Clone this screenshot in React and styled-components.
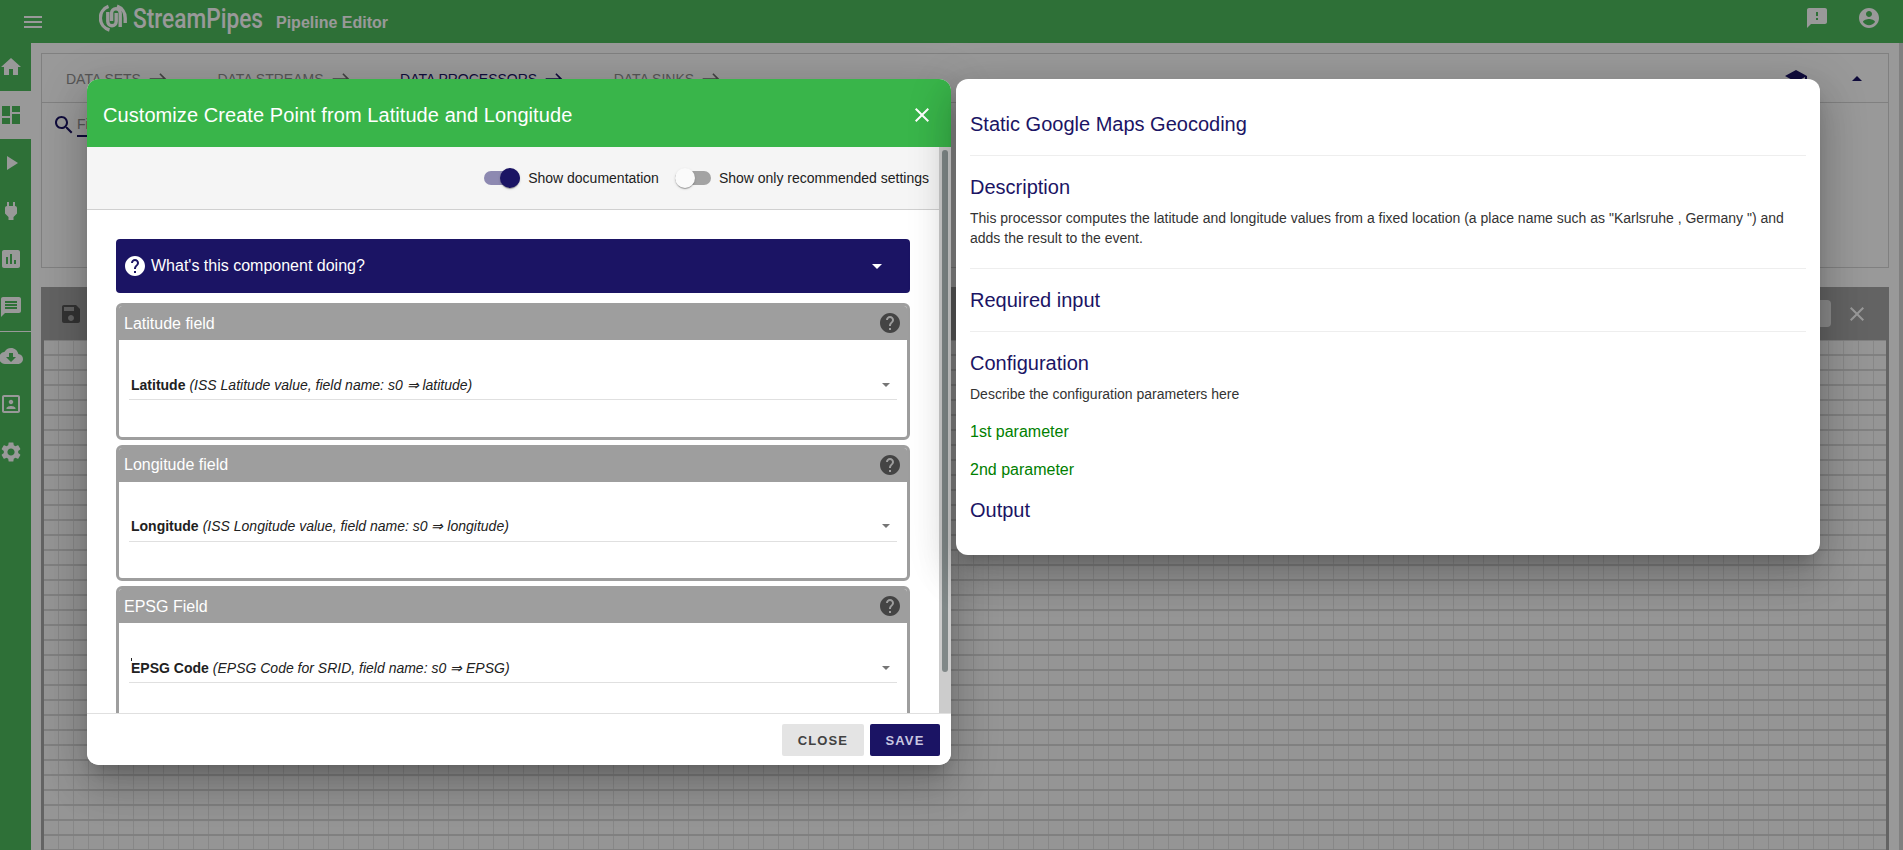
import React from 'react';
import styled, { createGlobalStyle } from 'styled-components';

const icons = {
  menu: 'M3 18h18v-2H3v2zm0-5h18v-2H3v2zm0-7v2h18V6H3z',
  home: 'M10 20v-6h4v6h5v-8h3L12 3 2 12h3v8z',
  dashboard: 'M3 13h8V3H3v10zm0 8h8v-6H3v6zm10 0h8V11h-8v10zm0-18v6h8V3h-8z',
  play: 'M8 5v14l11-7z',
  plug: 'M16.01 7L16 3h-2v4h-4V3H8v4h-.01C7 6.99 6 7.99 6 8.99v5.49L9.5 18v3h5v-3l3.5-3.51v-5.5c0-1-1-2-1.99-1.99z',
  chart: 'M19 3H5c-1.1 0-2 .9-2 2v14c0 1.1.9 2 2 2h14c1.1 0 2-.9 2-2V5c0-1.1-.9-2-2-2zM9 17H7v-7h2v7zm4 0h-2V7h2v10zm4 0h-2v-4h2v4z',
  message: 'M20 2H4c-1.1 0-1.99.9-1.99 2L2 22l4-4h14c1.1 0 2-.9 2-2V4c0-1.1-.9-2-2-2zm-2 12H6v-2h12v2zm0-3H6V9h12v2zm0-3H6V6h12v2z',
  cloud: 'M19.35 10.04C18.67 6.59 15.64 4 12 4 9.11 4 6.6 5.64 5.35 8.04 2.34 8.36 0 10.91 0 14c0 3.31 2.69 6 6 6h13c2.76 0 5-2.24 5-5 0-2.64-2.05-4.78-4.65-4.96zM17 13l-5 5-5-5h3V9h4v4h3z',
  portrait: 'M12 12.25c1.24 0 2.25-1.01 2.25-2.25S13.24 7.75 12 7.75 9.75 8.76 9.75 10s1.01 2.25 2.25 2.25zm4.5 4c0-1.5-3-2.25-4.5-2.25s-4.5.75-4.5 2.25V17h9v-.75zM19 3H5c-1.1 0-2 .9-2 2v14c0 1.1.9 2 2 2h14c1.1 0 2-.9 2-2V5c0-1.1-.9-2-2-2zm0 16H5V5h14v14z',
  settings: 'M19.14 12.94c.04-.3.06-.61.06-.94 0-.32-.02-.64-.07-.94l2.03-1.58c.18-.14.23-.41.12-.61l-1.92-3.32c-.12-.22-.37-.29-.59-.22l-2.39.96c-.5-.38-1.03-.7-1.62-.94l-.36-2.54c-.04-.24-.24-.41-.48-.41h-3.84c-.24 0-.43.17-.47.41l-.36 2.54c-.59.24-1.13.57-1.62.94l-2.39-.96c-.22-.08-.47 0-.59.22L2.74 8.87c-.12.21-.08.47.12.61l2.03 1.58c-.05.3-.09.63-.09.94s.02.64.07.94l-2.03 1.58c-.18.14-.23.41-.12.61l1.92 3.32c.12.22.37.29.59.22l2.39-.96c.5.38 1.03.7 1.62.94l.36 2.54c.05.24.24.41.48.41h3.84c.24 0 .44-.17.47-.41l.36-2.54c.59-.24 1.13-.56 1.62-.94l2.39.96c.22.08.47 0 .59-.22l1.92-3.32c.12-.22.07-.47-.12-.61l-2.01-1.58zM12 15.6c-1.98 0-3.6-1.62-3.6-3.6s1.62-3.6 3.6-3.6 3.6 1.62 3.6 3.6-1.62 3.6-3.6 3.6z',
  feedback: 'M20 2H4c-1.1 0-1.99.9-1.99 2L2 22l4-4h14c1.1 0 2-.9 2-2V4c0-1.1-.9-2-2-2zm-7 12h-2v-2h2v2zm0-4h-2V6h2v4z',
  account: 'M12 2C6.48 2 2 6.48 2 12s4.48 10 10 10 10-4.48 10-10S17.52 2 12 2zm0 3c1.66 0 3 1.34 3 3s-1.34 3-3 3-3-1.34-3-3 1.34-3 3-3zm0 14.2c-2.5 0-4.71-1.28-6-3.22.03-1.99 4-3.08 6-3.08 1.99 0 5.97 1.09 6 3.08-1.29 1.94-3.5 3.22-6 3.22z',
  help: 'M12 2C6.48 2 2 6.48 2 12s4.48 10 10 10 10-4.48 10-10S17.52 2 12 2zm1 17h-2v-2h2v2zm2.07-7.75l-.9.92C13.45 12.9 13 13.5 13 15h-2v-.5c0-1.1.45-2.1 1.17-2.83l1.24-1.26c.37-.36.59-.86.59-1.41 0-1.1-.9-2-2-2s-2 .9-2 2H8c0-2.21 1.79-4 4-4s4 1.79 4 4c0 .88-.36 1.68-.93 2.25z',
  save: 'M17 3H5c-1.11 0-2 .9-2 2v14c0 1.1.89 2 2 2h14c1.1 0 2-.9 2-2V7l-4-4zm-5 16c-1.66 0-3-1.34-3-3s1.34-3 3-3 3 1.34 3 3-1.34 3-3 3zm3-10H5V5h10v4z',
  close: 'M19 6.41L17.59 5 12 10.59 6.41 5 5 6.41 10.59 12 5 17.59 6.41 19 12 13.41 17.59 19 19 17.59 13.41 12z',
  arrow: 'M15 5l-1.41 1.41L18.17 11H2v2h16.17l-4.58 4.59L15 19l7-7z',
  search: 'M15.5 14h-.79l-.28-.27C15.41 12.59 16 11.11 16 9.5 16 5.91 13.09 3 9.5 3S3 5.91 3 9.5 5.91 16 9.5 16c1.61 0 3.09-.59 4.23-1.57l.27.28v.79l5 4.99L20.49 19l-4.99-5zm-6 0C7.01 14 5 11.99 5 9.5S7.01 5 9.5 5 14 7.01 14 9.5 11.99 14 9.5 14z',
  school: 'M5 13.18v4L12 21l7-3.82v-4L12 17l-7-3.82zM12 3L1 9l11 6 9-4.91V17h2V9L12 3z',
};

const GlobalStyle = createGlobalStyle`
  html, body {
    margin: 0;
    padding: 0;
    overflow: hidden;
    background: #fff;
  }
  * {
    box-sizing: border-box;
  }
`;

const Svg = styled.svg`
  display: block;
  flex: none;
  fill: currentColor;
`;

function Icon({ name, size = 24, ...rest }) {
  return (
    <Svg viewBox="0 0 24 24" width={size} height={size} {...rest}>
      <path d={icons[name]} />
    </Svg>
  );
}

const Page = styled.div`
  position: relative;
  width: 1903px;
  height: 850px;
  overflow: hidden;
  font-family: 'Liberation Sans', Arial, sans-serif;
`;

/* ---- page behind the dialogs ---- */

const Toolbar = styled.header`
  height: 43px;
  background: #4dbb5d;
  color: #fff;
  display: flex;
  align-items: center;
  padding-left: 21px;
  padding-right: 22px;
`;

const Logo = styled.div`
  display: flex;
  align-items: center;
  margin-left: 54px;
  gap: 6px;
  margin-top: -7px;
`;

const LogoText = styled.span`
  font-family: Roboto, sans-serif;
  font-size: 27px;
  font-weight: 500;
  line-height: 36px;
  width: 128px;
  white-space: nowrap;
  transform: scaleX(0.84);
  transform-origin: left center;
  margin-top: 1px;
`;

const PageTitle = styled.span`
  font-size: 16px;
  font-weight: 700;
  margin-left: 9px;
  margin-top: 10px;
`;

const ToolbarRight = styled.div`
  margin-left: auto;
  display: flex;
  gap: 28px;
  margin-top: -7px;
`;

const Main = styled.div`
  display: flex;
  height: 807px;
`;

const Sidebar = styled.nav`
  width: 31px;
  flex: none;
  background: #4dbb5d;
`;

const NavItem = styled.div`
  height: 48px;
  display: flex;
  align-items: center;
  overflow: hidden;
  background: ${p => (p.$active ? '#fff' : 'transparent')};
  color: ${p => (p.$active ? '#4dbb5d' : '#fff')};
  svg {
    margin-left: -1px;
  }
`;

const NavDivider = styled.div`
  height: 1px;
  background: #fff;
`;

const Content = styled.main`
  flex: 1;
  min-width: 0;
  padding: 10px 10px 0;
  display: flex;
  flex-direction: column;
`;

const Tools = styled.section`
  height: 215px;
  border: 1px solid #d5d5d5;
`;

const TabRow = styled.div`
  height: 49px;
  border-bottom: 1px solid #d5d5d5;
  display: flex;
  align-items: center;
  padding: 1px 24px 0;
  color: #1b1464;
`;

const Tab = styled.div`
  display: flex;
  align-items: center;
  gap: 7px;
  margin-right: ${p => p.$gap}px;
  font-size: 14px;
  color: ${p => (p.$selected ? '#1b1464' : '#909090')};
  white-space: nowrap;
  svg {
    color: ${p => (p.$selected ? '#1b1464' : '#707070')};
  }
`;

const TabTools = styled.div`
  margin-left: auto;
  display: flex;
  align-items: center;
  gap: 44px;
`;

const CaretUp = styled.div`
  width: 0;
  height: 0;
  border-left: 5px solid transparent;
  border-right: 5px solid transparent;
  border-bottom: 5px solid #1b1464;
  margin-right: 2px;
`;

const SearchRow = styled.div`
  display: flex;
  align-items: center;
  padding: 10px 0 0 10px;
  color: #1b1464;
  gap: 1px;
`;

const SearchField = styled.div`
  width: 200px;
  font-size: 14px;
  line-height: 20px;
  color: #909090;
  border-bottom: 2px solid #1b1464;
  padding-bottom: 1px;
`;

const Editor = styled.section`
  flex: 1;
  margin-top: 19px;
  border: solid #a5a5a5;
  border-width: 0 3px;
  display: flex;
  flex-direction: column;
`;

const EditorBar = styled.div`
  height: 53px;
  background: #a5a5a5;
  display: flex;
  align-items: center;
  padding-left: 15px;
  padding-right: 17px;
  color: #555;
`;

const EditorInput = styled.div`
  margin-left: auto;
  width: 31px;
  height: 27px;
  border-radius: 4px;
  background: #e6e6e6;
  margin-right: 14px;
`;

const EditorClose = styled.div`
  color: #fff;
`;

const Canvas = styled.div`
  flex: 1;
  background-color: #f8f8f8;
  background-image:
    linear-gradient(to bottom, #d6d6d6 2px, transparent 2px),
    linear-gradient(to right, #e2e2e2 1px, transparent 1px);
  background-size: 15px 15px;
  background-position: 0 -1px, -1px 0;
`;

const PageScroll = styled.div`
  width: 4px;
  flex: none;
  margin-left: auto;
  background: #d5d5d5;
`;

/* ---- overlay and dialogs ---- */

const Backdrop = styled.div`
  position: absolute;
  inset: 0;
  background: rgba(0, 0, 0, 0.4);
  display: flex;
  align-items: flex-start;
  gap: 5px;
  padding: 79px 0 0 87px;
`;

const panelShadow = `
  box-shadow: 0 11px 15px -7px rgba(0, 0, 0, 0.2),
    0 24px 38px 3px rgba(0, 0, 0, 0.14),
    0 9px 46px 8px rgba(0, 0, 0, 0.12);
`;

const Dialog = styled.div`
  width: 864px;
  height: 686px;
  background: #fff;
  border-radius: 12px;
  overflow: hidden;
  display: flex;
  flex-direction: column;
  ${panelShadow}
`;

const DialogHeader = styled.div`
  height: 68px;
  flex: none;
  background: #39b54a;
  color: #fff;
  display: flex;
  align-items: center;
  justify-content: space-between;
  padding: 4px 17px 0 16px;
  font-size: 20px;
  letter-spacing: 0.07px;
`;

const DialogBody = styled.div`
  flex: 1;
  min-height: 0;
  display: flex;
`;

const Scroller = styled.div`
  flex: 1;
  min-width: 0;
  overflow: hidden;
`;

const ScrollTrack = styled.div`
  width: 12px;
  flex: none;
  background: #ccc;
  padding: 3px;
`;

const ScrollThumb = styled.div`
  height: 522px;
  border-radius: 3px;
  background: #808888;
`;

const OptionsBar = styled.div`
  height: 63px;
  background: #f5f5f5;
  border-bottom: 1px solid #d0d0d0;
  display: flex;
  align-items: center;
  justify-content: flex-end;
  padding-right: 10px;
  gap: 16px;
`;

const Option = styled.label`
  display: flex;
  align-items: center;
  font-size: 14px;
  color: #212121;
  gap: 8px;
`;

const Switch = styled.span`
  position: relative;
  width: 36px;
  height: 14px;
  border-radius: 7px;
  background: ${p => (p.$on ? '#8d89b1' : '#a3a3a3')};
  &::after {
    content: '';
    position: absolute;
    top: -3px;
    left: ${p => (p.$on ? '16px' : '0')};
    width: 20px;
    height: 20px;
    border-radius: 50%;
    background: ${p => (p.$on ? '#1b1464' : '#fafafa')};
    box-shadow: 0 2px 1px -1px rgba(0, 0, 0, 0.2), 0 1px 1px rgba(0, 0, 0, 0.14), 0 1px 3px rgba(0, 0, 0, 0.12);
  }
`;

const Sections = styled.div`
  padding: 29px 29px 32px;
`;

const Accordion = styled.div`
  height: 54px;
  background: #1b1464;
  border-radius: 4px;
  color: #fff;
  display: flex;
  align-items: center;
  padding: 0 28px 0 7px;
  font-size: 16px;
  gap: 4px;
  margin-bottom: 10px;
`;

const AccordionTitle = styled.span`
  flex: 1;
`;

const CaretDown = styled.div`
  width: 0;
  height: 0;
  border-left: 5px solid transparent;
  border-right: 5px solid transparent;
  border-top: 5px solid #fff;
`;

const Card = styled.div`
  height: 136.5px;
  border: 3px solid #9e9e9e;
  border-radius: 6px;
  margin-bottom: 5px;
  overflow: hidden;
`;

const CardHeader = styled.div`
  height: 34px;
  background: #9e9e9e;
  color: #fff;
  display: flex;
  align-items: center;
  justify-content: space-between;
  padding: 0 5px;
  font-size: 16px;
  svg {
    color: #444;
  }
`;

const CardTitle = styled.span`
  margin-top: 1px;
`;

const CardBody = styled.div`
  padding: 31px 10px 0;
`;

const SelectRow = styled.div`
  position: relative;
  height: 29px;
  border-bottom: 1px solid #e0e0e0;
  display: flex;
  align-items: center;
  padding-left: 2px;
  padding-right: 7px;
  font-size: 14px;
  color: #212121;
  padding-bottom: 1px;
  ${p => p.$tick && `
    &::before {
      content: '';
      position: absolute;
      left: 2px;
      top: 4px;
      width: 1px;
      height: 3px;
      background: #222;
    }
  `}
`;

const FieldName = styled.b`
  margin-right: 4px;
  font-weight: 700;
`;

const FieldHint = styled.i`
  flex: 1;
`;

const SelectArrow = styled.div`
  width: 0;
  height: 0;
  border-left: 4px solid transparent;
  border-right: 4px solid transparent;
  border-top: 4.5px solid #757575;
`;

const DialogFooter = styled.div`
  height: 52px;
  flex: none;
  border-top: 1px solid #e0e0e0;
  background: #fff;
  display: flex;
  justify-content: flex-end;
  gap: 6px;
  padding: 10px 11px 0 0;
`;

const Button = styled.button`
  height: 32px;
  width: ${p => p.$width}px;
  border: 0;
  border-radius: 2px;
  padding: 0;
  font-family: 'Liberation Sans', Arial, sans-serif;
  font-size: 13px;
  font-weight: 700;
  letter-spacing: 1.1px;
  background: ${p => (p.$primary ? '#1b1464' : '#e4e4e4')};
  color: ${p => (p.$primary ? '#c8c6e0' : '#424242')};
`;

const DocPanel = styled.aside`
  width: 864px;
  background: #fff;
  border-radius: 12px;
  padding: 33px 14px 33px;
  ${panelShadow}
`;

const DocHeading = styled.h3`
  margin: 0;
  font-size: 20px;
  line-height: 24px;
  font-weight: 400;
  color: #1b1464;
  margin-top: ${p => p.$top || 0}px;
`;

const DocRule = styled.hr`
  margin: ${p => p.$top}px 0 19px;
  border: 0;
  height: 1px;
  background: #eee;
`;

const DocText = styled.p`
  margin: ${p => p.$top}px 0 0;
  font-size: 14px;
  line-height: 20px;
  color: #333;
`;

const DocParam = styled.p`
  margin: ${p => p.$top}px 0 0;
  font-size: 16px;
  line-height: 20px;
  color: #008000;
`;

const FIELDS = [
  { title: 'Latitude field', name: 'Latitude', hint: '(ISS Latitude value, field name: s0 ⇒ latitude)' },
  { title: 'Longitude field', name: 'Longitude', hint: '(ISS Longitude value, field name: s0 ⇒ longitude)' },
  { title: 'EPSG Field', name: 'EPSG Code', hint: '(EPSG Code for SRID, field name: s0 ⇒ EPSG)', tick: true },
];

const NAV_TOP = [
  { icon: 'home' },
  { icon: 'dashboard', active: true },
  { icon: 'play' },
  { icon: 'plug' },
  { icon: 'chart' },
  { icon: 'message' },
];

const NAV_BOTTOM = ['cloud', 'portrait', 'settings'];

const TABS = [
  { label: 'DATA SETS', gap: 49.5 },
  { label: 'DATA STREAMS', gap: 49.5 },
  { label: 'DATA PROCESSORS', gap: 49.5, selected: true },
  { label: 'DATA SINKS', gap: 0 },
];

function StreamPipesMark() {
  return (
    <svg width="28" height="28" viewBox="0 0 28 28" fill="none" stroke="currentColor" strokeWidth="3.4">
      <path d="M9.5 2.4A12.4 12.4 0 0 0 10.5 26" />
      <path d="M18 2.2A12.4 12.4 0 0 1 26.2 14V19" />
      <path d="M8.8 8V17.5a4.2 4.2 0 0 0 8.4 0V9" />
      <path d="M12.6 17V9a4.3 4.3 0 0 1 8.6 0V23" />
    </svg>
  );
}

export default function App() {
  return (
    <Page>
      <GlobalStyle />
      <Toolbar>
        <Icon name="menu" />
        <Logo>
          <StreamPipesMark />
          <LogoText>StreamPipes</LogoText>
          <PageTitle>Pipeline Editor</PageTitle>
        </Logo>
        <ToolbarRight>
          <Icon name="feedback" />
          <Icon name="account" />
        </ToolbarRight>
      </Toolbar>

      <Main>
        <Sidebar>
          {NAV_TOP.map(item => (
            <NavItem key={item.icon} $active={item.active}>
              <Icon name={item.icon} />
            </NavItem>
          ))}
          <NavDivider />
          {NAV_BOTTOM.map(icon => (
            <NavItem key={icon}><Icon name={icon} /></NavItem>
          ))}
        </Sidebar>

        <Content>
          <Tools>
            <TabRow>
              {TABS.map(tab => (
                <Tab key={tab.label} $gap={tab.gap} $selected={tab.selected}>
                  {tab.label}
                  <Icon name="arrow" size={20} />
                </Tab>
              ))}
              <TabTools>
                <Icon name="school" />
                <CaretUp />
              </TabTools>
            </TabRow>
            <SearchRow>
              <Icon name="search" />
              <SearchField>Find</SearchField>
            </SearchRow>
          </Tools>
          <Editor>
            <EditorBar>
              <Icon name="save" />
              <EditorInput />
              <EditorClose><Icon name="close" /></EditorClose>
            </EditorBar>
            <Canvas />
          </Editor>
        </Content>
        <PageScroll />
      </Main>

      <Backdrop>
        <Dialog>
          <DialogHeader>
            Customize Create Point from Latitude and Longitude
            <Icon name="close" />
          </DialogHeader>
          <DialogBody>
            <Scroller>
              <OptionsBar>
                <Option><Switch $on />Show documentation</Option>
                <Option><Switch />Show only recommended settings</Option>
              </OptionsBar>
              <Sections>
                <Accordion>
                  <Icon name="help" />
                  <AccordionTitle>What's this component doing?</AccordionTitle>
                  <CaretDown />
                </Accordion>
                {FIELDS.map(field => (
                  <Card key={field.title}>
                    <CardHeader>
                      <CardTitle>{field.title}</CardTitle>
                      <Icon name="help" />
                    </CardHeader>
                    <CardBody>
                      <SelectRow $tick={field.tick}>
                        <FieldName>{field.name}</FieldName>
                        <FieldHint>{field.hint}</FieldHint>
                        <SelectArrow />
                      </SelectRow>
                    </CardBody>
                  </Card>
                ))}
              </Sections>
            </Scroller>
            <ScrollTrack><ScrollThumb /></ScrollTrack>
          </DialogBody>
          <DialogFooter>
            <Button $width={82}>CLOSE</Button>
            <Button $width={70} $primary>SAVE</Button>
          </DialogFooter>
        </Dialog>

        <DocPanel>
          <DocHeading>Static Google Maps Geocoding</DocHeading>
          <DocRule $top={19} />
          <DocHeading>Description</DocHeading>
          <DocText $top={9}>
            This processor computes the latitude and longitude values from a fixed location (a place name such as "Karlsruhe , Germany ") and adds the result to the event.
          </DocText>
          <DocRule $top={20} />
          <DocHeading>Required input</DocHeading>
          <DocRule $top={19} />
          <DocHeading>Configuration</DocHeading>
          <DocText $top={9}>Describe the configuration parameters here</DocText>
          <DocParam $top={18}>1st parameter</DocParam>
          <DocParam $top={18}>2nd parameter</DocParam>
          <DocHeading $top={18}>Output</DocHeading>
        </DocPanel>
      </Backdrop>
    </Page>
  );
}
